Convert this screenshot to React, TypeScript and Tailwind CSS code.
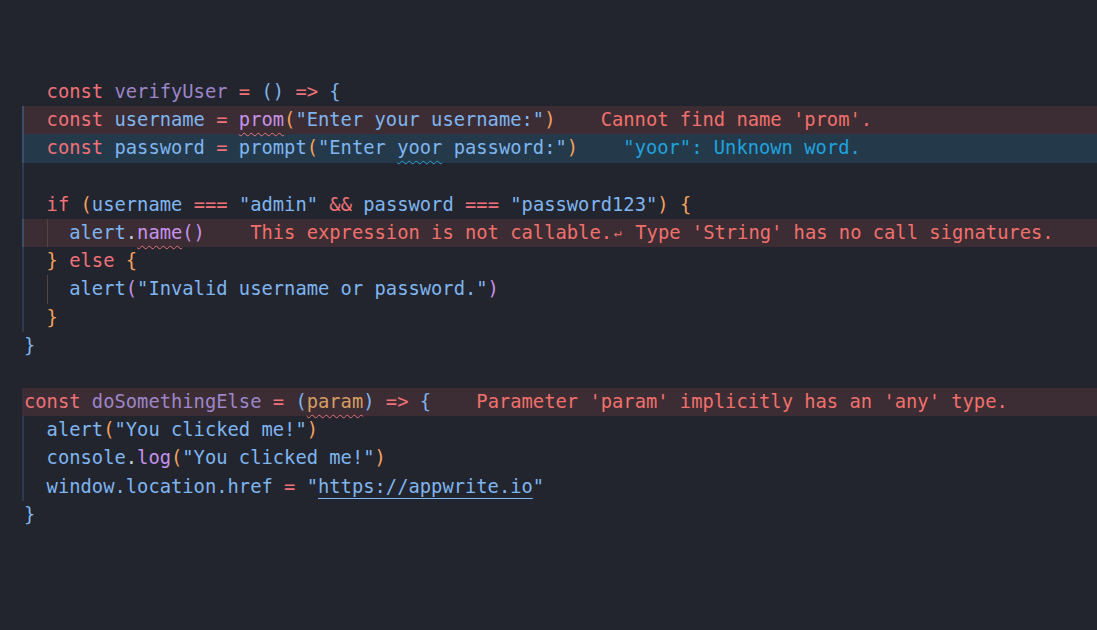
import React from 'react';

type Tok = [string, string?];

const RED = "text-[#f07178]";
const BLUE = "text-[#7fb5f0]";
const PURPLE = "text-[#c792ea]";
const DIM = "text-[#9d86c9]";
const ORANGE = "text-[#f5a25d]";
const PARAM = "text-[#d69d63]";

const squiggle = "underline decoration-wavy decoration-[1px] underline-offset-[6px]";

const Line = ({
  children,
  band,
  guide,
  guideColor = "border-[#2d3b50]",
}: {
  children: React.ReactNode;
  band?: "error" | "info";
  guide?: boolean;
  guideColor?: string;
}) => {
  const bg = band === "error" ? "bg-[#3b2d33]" : band === "info" ? "bg-[#243a4b]" : "";
  const edge = guide ? `border-l-2 ${guideColor}` : "border-l-2 border-transparent";
  return <div className={`flex h-[28.2px] items-center whitespace-pre ${bg} ${edge}`}>{children}</div>;
};

const Toks = ({ items }: { items: Tok[] }) => (
  <>
    {items.map(([t, c], i) => (
      <span key={i} className={c ?? BLUE}>
        {t}
      </span>
    ))}
  </>
);

const InnerGuide = () => (
  <>
    <span className="w-[2ch]">{"  "}</span>
    <span className="w-[2ch] self-stretch border-l border-[#55443f]" />
  </>
);

const App = () => {
  return (
    <div className="min-h-[630px] w-full bg-[#22252e] pt-[78px] pl-[22px] font-['DejaVu_Sans_Mono',monospace] text-[18.8px]">
      <Line>
        <Toks items={[["  const", RED], [" verifyUser", DIM], [" = ", RED], ["()"], [" => ", RED], ["{"]]} />
      </Line>
      <Line band="error" guide guideColor="border-[#3c4e68]">
        <Toks items={[["  const", RED], [" username"], [" = ", RED]]} />
        <span className={`${PURPLE} ${squiggle} decoration-[#f07178]`}>prom</span>
        <Toks items={[["(", ORANGE], ["\"Enter your username:\""], [")", ORANGE]]} />
        <span className="text-[#f2706c]">{"    Cannot find name 'prom'."}</span>
      </Line>
      <Line band="info" guide guideColor="border-[#3c4e68]">
        <Toks items={[["  const", RED], [" password"], [" = ", RED], ["prompt"], ["(", ORANGE], ["\"Enter "]]} />
        <span className={`${BLUE} ${squiggle} decoration-[#2aa1dc]`}>yoor</span>
        <Toks items={[[" password:\""], [")", ORANGE]]} />
        <span className="text-[#1fa2de]">{"    \"yoor\": Unknown word."}</span>
      </Line>
      <Line guide>{" "}</Line>
      <Line guide>
        <Toks
          items={[
            ["  if", RED],
            [" (", ORANGE],
            ["username"],
            [" === ", RED],
            ["\"admin\""],
            [" && ", RED],
            ["password"],
            [" === ", RED],
            ["\"password123\""],
            [")", ORANGE],
            [" {", ORANGE],
          ]}
        />
      </Line>
      <Line band="error" guide guideColor="border-[#3c4e68]">
        <InnerGuide />
        <Toks items={[["alert"], [".", "text-[#c8cdd6]"]]} />
        <span className={`${PURPLE} ${squiggle} decoration-[#f07178]`}>name</span>
        <Toks items={[["()", PURPLE]]} />
        <span className="text-[#f2706c]">{"    This expression is not callable."}</span>
        <span className="w-[12px] text-center text-[13px] text-[#f2706c]">↵</span>
        <span className="text-[#f2706c]">{" Type 'String' has no call signatures."}</span>
      </Line>
      <Line guide>
        <Toks items={[["  }", ORANGE], [" else ", RED], ["{", ORANGE]]} />
      </Line>
      <Line guide>
        <InnerGuide />
        <Toks items={[["alert"], ["(", PURPLE], ["\"Invalid username or password.\""], [")", PURPLE]]} />
      </Line>
      <Line guide>
        <Toks items={[["  }", ORANGE]]} />
      </Line>
      <Line>
        <Toks items={[["}"]]} />
      </Line>
      <Line>{" "}</Line>
      <Line band="error">
        <Toks items={[["const", RED], [" doSomethingElse", DIM], [" = ", RED], ["("]]} />
        <span className={`${PARAM} ${squiggle} decoration-[#f07178]`}>param</span>
        <Toks items={[[")"], [" => ", RED], ["{"]]} />
        <span className="text-[#f2706c]">{"    Parameter 'param' implicitly has an 'any' type."}</span>
      </Line>
      <Line guide>
        <Toks items={[["  alert"], ["(", ORANGE], ["\"You clicked me!\""], [")", ORANGE]]} />
      </Line>
      <Line guide>
        <Toks items={[["  console"], [".", "text-[#c8cdd6]"], ["log", PURPLE], ["(", ORANGE], ["\"You clicked me!\""], [")", ORANGE]]} />
      </Line>
      <Line guide>
        <Toks items={[["  window.location.href"], [" = ", RED], ["\""]]} />
        <span className={`${BLUE} underline decoration-[1px] underline-offset-[5px] decoration-[#7fb5f0]`}>https://appwrite.io</span>
        <Toks items={[["\""]]} />
      </Line>
      <Line>
        <Toks items={[["}"]]} />
      </Line>
    </div>
  );
};

export default App;
